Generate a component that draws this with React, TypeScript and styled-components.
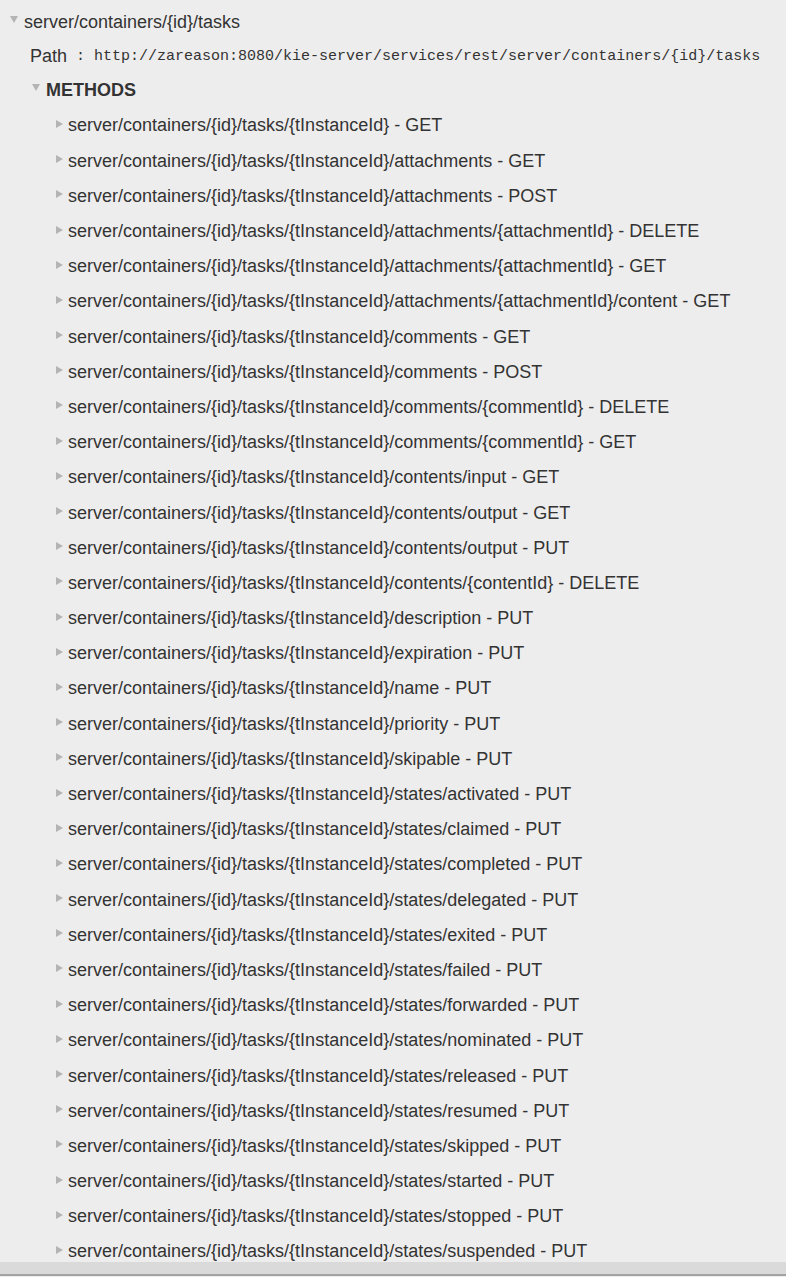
import React from "react";
import styled, { createGlobalStyle } from "styled-components";

const Global = createGlobalStyle`
  html, body { margin: 0; padding: 0; background: #eeeded; }
  body { font-family: "Liberation Sans", Arial, sans-serif; color: #333; }
`;

const Page = styled.div`
  height: 1277px;
  display: flex;
  flex-direction: column;
  overflow: hidden;
`;

const Tree = styled.div`
  flex: 1;
  overflow: hidden;
  padding-top: 5px;
`;

const Row = styled.div<{ $indent: number }>`
  display: flex;
  align-items: center;
  height: 35.2px;
  padding-left: ${(p) => p.$indent}px;
  font-size: 18px;
  white-space: nowrap;
`;

const Toggle = styled.span<{ $open?: boolean }>`
  display: inline-block;
  width: 0;
  height: 0;
  margin-right: ${(p) => (p.$open ? 6 : 5)}px;
  margin-top: ${(p) => (p.$open ? -6 : -4)}px;
  ${(p) =>
    p.$open
      ? `border-left: 4px solid transparent; border-right: 4px solid transparent; border-top: 7px solid #b4b4b4;`
      : `border-top: 4px solid transparent; border-bottom: 4px solid transparent; border-left: 7px solid #b4b4b4;`}
`;

const Label = styled.span<{ $bold?: boolean }>`
  font-weight: ${(p) => (p.$bold ? 700 : 400)};
`;

const PathRow = styled(Row)`
  height: 33px;
`;

const PathKey = styled.span`
  font-size: 18px;
`;

const Sep = styled.span`
  font-family: "Liberation Mono", "DejaVu Sans Mono", monospace;
  font-size: 15px;
  margin: 0 9px 0 9px;
`;

const Mono = styled.span`
  font-family: "Liberation Mono", "DejaVu Sans Mono", monospace;
  font-size: 15px;
`;

const ScrollBar = styled.div`
  height: 12px;
  background: #dadada;
  border-bottom: 2px solid #a3a3a3;
  margin-bottom: 1px;
  flex-shrink: 0;
`;

const base = "server/containers/{id}/tasks/{tInstanceId}";
const methods = [
  " - GET",
  "/attachments - GET",
  "/attachments - POST",
  "/attachments/{attachmentId} - DELETE",
  "/attachments/{attachmentId} - GET",
  "/attachments/{attachmentId}/content - GET",
  "/comments - GET",
  "/comments - POST",
  "/comments/{commentId} - DELETE",
  "/comments/{commentId} - GET",
  "/contents/input - GET",
  "/contents/output - GET",
  "/contents/output - PUT",
  "/contents/{contentId} - DELETE",
  "/description - PUT",
  "/expiration - PUT",
  "/name - PUT",
  "/priority - PUT",
  "/skipable - PUT",
  "/states/activated - PUT",
  "/states/claimed - PUT",
  "/states/completed - PUT",
  "/states/delegated - PUT",
  "/states/exited - PUT",
  "/states/failed - PUT",
  "/states/forwarded - PUT",
  "/states/nominated - PUT",
  "/states/released - PUT",
  "/states/resumed - PUT",
  "/states/skipped - PUT",
  "/states/started - PUT",
  "/states/stopped - PUT",
  "/states/suspended - PUT",
];

export default function App() {
  return (
    <>
      <Global />
      <Page>
        <Tree>
          <Row $indent={10}>
            <Toggle $open />
            <Label>server/containers/{"{id}"}/tasks</Label>
          </Row>
          <PathRow $indent={30}>
            <PathKey>Path</PathKey>
            <Sep>:</Sep>
            <Mono>http://zareason:8080/kie-server/services/rest/server/containers/{"{id}"}/tasks</Mono>
          </PathRow>
          <Row $indent={32}>
            <Toggle $open />
            <Label $bold>METHODS</Label>
          </Row>
          {methods.map((m) => (
            <Row key={m} $indent={56}>
              <Toggle />
              <Label>{base + m}</Label>
            </Row>
          ))}
        </Tree>
        <ScrollBar />
      </Page>
    </>
  );
}
